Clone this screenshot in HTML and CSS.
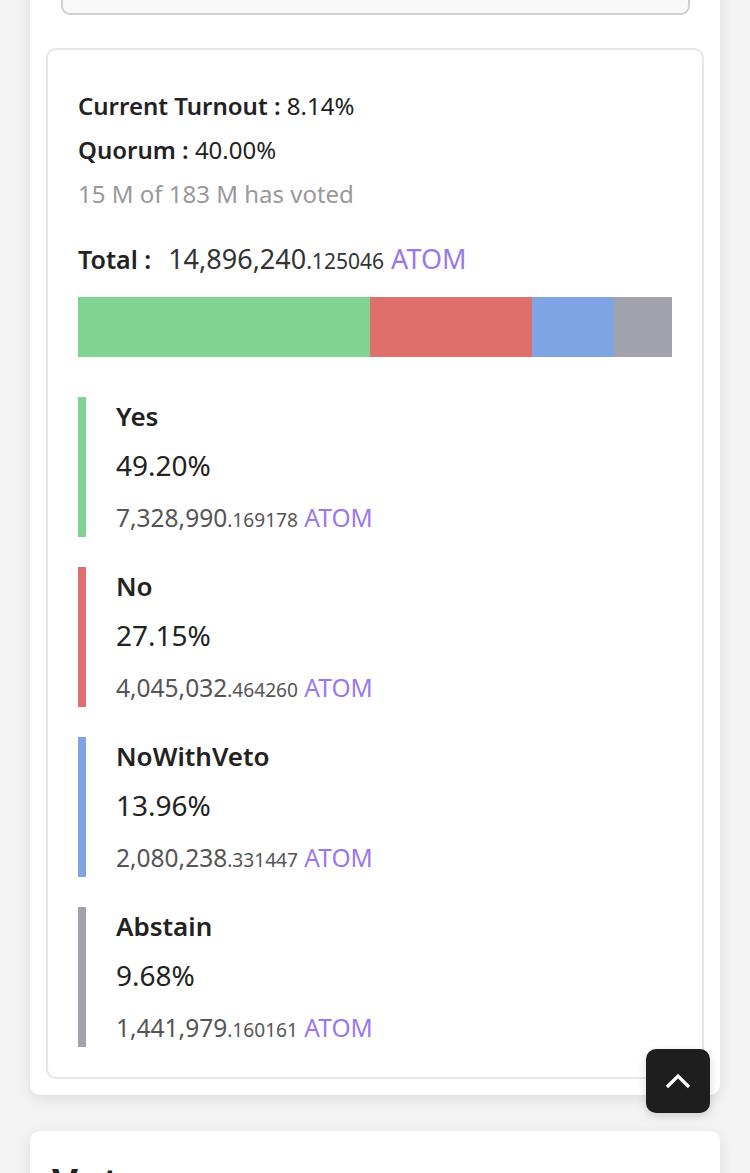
FILE: index.html
```html
<!DOCTYPE html>
<html lang="en">
<head>
    <title>Proposal</title>
    <meta charset="UTF-8">
    <link rel="stylesheet" href="styles.css">
</head>
<body>
    <div class="page">
        <section class="card">
            <div class="action-btn"></div>

            <article class="tally">
                <p class="stat"><b>Current Turnout :</b> 8.14%</p>
                <p class="stat"><b>Quorum :</b> 40.00%</p>
                <p class="stat muted">15 M of 183 M has voted</p>

                <p class="total"><b>Total :</b>&nbsp; <span class="amount">14,896,240<small>.125046</small> <span class="denom">ATOM</span></span></p>

                <div class="bar">
                    <div class="seg yes" style="width: 49.20%"></div>
                    <div class="seg no" style="width: 27.15%"></div>
                    <div class="seg veto" style="width: 13.96%"></div>
                    <div class="seg abstain" style="width: 9.68%"></div>
                </div>

                <ul class="options">
                    <li class="option yes">
                        <h4>Yes</h4>
                        <div class="pct">49.20%</div>
                        <div class="tokens">7,328,990<small>.169178</small> <span class="denom">ATOM</span></div>
                    </li>
                    <li class="option no">
                        <h4>No</h4>
                        <div class="pct">27.15%</div>
                        <div class="tokens">4,045,032<small>.464260</small> <span class="denom">ATOM</span></div>
                    </li>
                    <li class="option veto">
                        <h4>NoWithVeto</h4>
                        <div class="pct">13.96%</div>
                        <div class="tokens">2,080,238<small>.331447</small> <span class="denom">ATOM</span></div>
                    </li>
                    <li class="option abstain">
                        <h4>Abstain</h4>
                        <div class="pct">9.68%</div>
                        <div class="tokens">1,441,979<small>.160161</small> <span class="denom">ATOM</span></div>
                    </li>
                </ul>
            </article>
        </section>

        <section class="card votes">
            <h2>Votes</h2>
        </section>
    </div>

    <a class="to-top" href="#">
        <svg width="26" height="16" viewBox="0 0 26 16">
            <polyline points="2,14 13,3 24,14" fill="none" stroke="#fff" stroke-width="3.2"/>
        </svg>
    </a>
</body>
</html>
```

FILE: styles.css
```css
* {
    box-sizing: border-box;
}

body {
    margin: 0;
    background: #f3f3f3;
    font-family: 'Noto Sans', 'Open Sans', sans-serif;
    color: #222;
}

.page {
    margin-top: -60px;
    padding: 0 30px;
}

.card {
    background: #fff;
    border-radius: 10px;
    padding: 19px 16px 16px;
    box-shadow: 0 4px 14px rgba(0, 0, 0, 0.09);
}

.action-btn {
    height: 56px;
    margin: 0 14px 33px 15px;
    background: #f8f8f8;
    border: 2px solid #cfcfcf;
    border-radius: 9px;
}

.tally {
    border: 2px solid #e6e6e6;
    border-radius: 10px;
    padding: 34px 30px 30px;
}

.stat, .total {
    margin: 0;
    font-size: 24px;
    line-height: 44px;
}

.stat b, .total b {
    font-weight: 600;
}

.muted {
    color: #999;
}

.total {
    margin-top: 23px;
    font-size: 25px;
    line-height: 40px;
}

.total b {
    margin-right: 4px;
}

.amount {
    font-size: 27px;
    color: #333;
}

small {
    font-size: 0.78em;
}

.denom {
    color: #9a78ec;
}

.bar {
    display: flex;
    height: 60px;
    margin-top: 16px;
}

.seg.yes { background: #82d293; }
.seg.no { background: #df6f6c; }
.seg.veto { background: #7ea4e3; }
.seg.abstain { background: #a1a2ab; }

.options {
    list-style: none;
    margin: 40px 0 0;
    padding: 0;
}

.option {
    border-left: 8px solid;
    padding-left: 30px;
    margin-bottom: 30px;
}

.option:last-child {
    margin-bottom: 0;
}

.option.yes { border-color: #82d293; }
.option.no { border-color: #df6f6c; }
.option.veto { border-color: #7ea4e3; }
.option.abstain { border-color: #a1a2ab; }

.option h4 {
    margin: 0;
    font-size: 26px;
    font-weight: 600;
    line-height: 38px;
}

.pct {
    margin-top: 10px;
    font-size: 28px;
    line-height: 40px;
}

.tokens {
    margin-top: 16px;
    font-size: 24.5px;
    line-height: 34px;
    height: 36px;
    color: #555;
}

.votes {
    margin-top: 36px;
    padding: 27px 22px;
    min-height: 200px;
}

.votes h2 {
    margin: 0;
    font-size: 40px;
    font-weight: 700;
    line-height: 48px;
}

.to-top {
    position: fixed;
    right: 40px;
    bottom: 60px;
    width: 64px;
    height: 64px;
    border-radius: 10px;
    background: #1e1e1e;
    display: flex;
    align-items: center;
    justify-content: center;
    box-shadow: 0 3px 10px rgba(0, 0, 0, 0.15);
}
```
